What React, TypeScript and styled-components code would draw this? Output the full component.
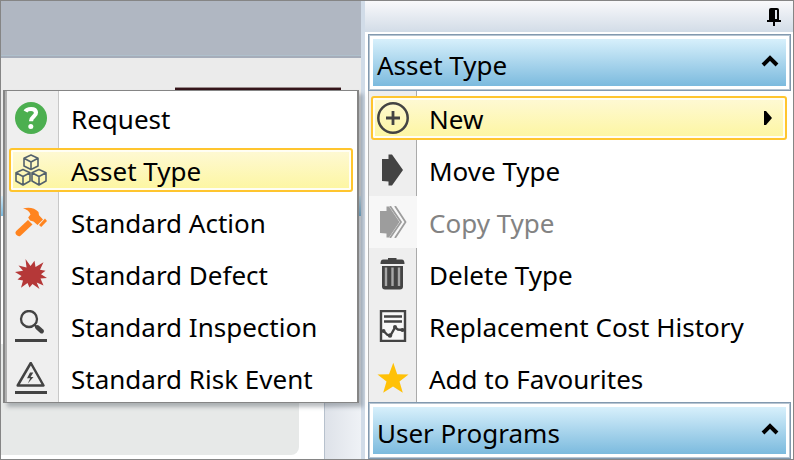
import React from "react";
import styled, { createGlobalStyle, css } from "styled-components";

const GlobalStyle = createGlobalStyle`
  *, *::before, *::after { box-sizing: border-box; }
  body {
    margin: 0;
    background: #fff;
    color: #000;
    font-family: "Noto Sans", "Open Sans", sans-serif;
    font-size: 26px;
    line-height: 36px;
  }
  button { font: inherit; color: inherit; }
`;

const Frame = styled.div`
  position: relative;
  display: grid;
  grid-template-columns: 360px 4px minmax(0, 1fr);
  min-height: 100vh;
  border: 1px solid #858585;
`;

const Workspace = styled.main`
  display: flex;
  flex-direction: column;
  background: #ebebeb;
`;

const WorkspaceHeader = styled.div`
  height: 57px;
  background: #b0b7c2;
  border-bottom: 2px solid #a5adba;
  box-shadow: inset 0 -1px #afc0cc;
`;

const TitleArea = styled.div`
  display: flex;
  height: 138px;
  padding: 29px 20px 0 174px;
`;

const TitleRule = styled.div`
  flex: 1;
  height: 4px;
  background: #35151a;
  border-top: 1px solid #998b8c;
`;

const BlueBand = styled.div`
  height: 20px;
  background: linear-gradient(#d4eaf6, #78b8dc);
`;

const Content = styled.div`
  flex: 1;
  display: grid;
  grid-template-columns: minmax(0, 1fr) 37px;
  background: #fff;
`;

const Card = styled.div`
  margin: 128px 25px 4px 0;
  border-radius: 0 0 8px 0;
  background: #e7e9e8;
`;

const ScrollTrack = styled.div`
  border-left: 1px solid #b7c1cd;
  background: linear-gradient(90deg, #dee2e9, #eff2f6);
`;

const Splitter = styled.div`
  background: #d1dce8;
`;

const Sidebar = styled.aside`
  display: flex;
  flex-direction: column;
  background: #fff;
`;

const PinBar = styled.div`
  display: flex;
  justify-content: flex-end;
  height: 31px;
  padding: 5px 10px 0 0;
  background: linear-gradient(#f9f9fb, #d2dce7);
`;

const PinButton = styled.button`
  width: 18px;
  height: 22px;
  padding: 0;
  border: 0;
  background: none;
  svg { display: block; }
`;

const Section = styled.section`
  margin: 2px 2px 0 3px;
  & + & { margin-top: 0; }
`;

const SectionButton = styled.button`
  display: flex;
  align-items: center;
  justify-content: space-between;
  width: 100%;
  height: 57px;
  padding: 4px 11px 0 8px;
  border: 1px solid #8299af;
  outline: 1px solid #b6c5d2;
  outline-offset: -2px;
  box-shadow: inset 0 0 0 4px #fff;
  background: linear-gradient(#d9f1fc 3px, #76b7dc 54px);
  text-align: left;
  svg { margin-bottom: 8px; }
`;

const rowSurface = css`
  border-color: #ffc52e;
  background: linear-gradient(#fef9d5, #fdf6a1);
  box-shadow: inset 0 0 0 2px #fffef4;
`;

const MenuItem = styled.button<{ $selected?: boolean; $gap: number }>`
  display: flex;
  align-items: center;
  gap: ${({ $gap }) => $gap}px;
  width: 100%;
  height: 44px;
  padding: 0 13px 0 4px;
  border: 2px solid transparent;
  border-radius: 3px;
  background: none;
  text-align: left;
  white-space: nowrap;
  ${({ $selected }) => $selected && rowSurface}
  &:disabled { color: #838383; }
  svg { flex: none; }
`;

const Label = styled.span`
  flex: 1;
  padding-top: 2px;
`;

const List = styled.ul`
  margin: 0;
  padding: 1px 0 0;
  list-style: none;
`;

const SidebarList = styled(List)`
  border-left: 1px solid #b1b1b1;
  background: linear-gradient(90deg, #eee 47px, #aaa 47px, #aaa 48px, #fff 48px);
`;

const Item = styled.li<{ $muted?: boolean }>`
  padding: 4px 4px 4px 2px;
  &:last-child { padding-bottom: 2px; }
  ${({ $muted }) => $muted && css`background: linear-gradient(90deg, #f7f7f7 48px, #fff 48px);`}
`;

const Flyout = styled.nav`
  position: absolute;
  top: 89px;
  left: 2px;
  width: 356px;
  border: 1px solid #858585;
  border-width: 1px 2px 1px 2px;
  box-shadow: 4px 4px 4px rgba(60, 70, 80, 0.35);
`;

const FlyoutList = styled(List)`
  border-left: 2px solid #b0b0b0;
  background: linear-gradient(90deg, #efefef 51px, #c8c8c8 51px, #c8c8c8 52px, #fff 52px);
`;

type IconName =
  | "request" | "cubes" | "hammer" | "defect" | "inspect" | "risk"
  | "plus" | "move" | "copy" | "trash" | "report" | "star";

const ink = "#434343";

const drawings: Record<IconName, React.ReactNode> = {
  request: (
    <>
      <circle cx="16" cy="16" r="16" fill="#4caf50" />
      <path d="M10.5 9.5C12 6.5 20.5 5.5 21 10.5C21.3 14.5 16 14.5 16 19.2" fill="none" stroke="#fff" strokeWidth="4.2" />
      <circle cx="15.8" cy="24.5" r="2.5" fill="#fff" />
    </>
  ),
  cubes: (
    <g fill="none" stroke="#53616c" strokeWidth="1.6" strokeLinejoin="round">
      <path d="M16 1 23 4.2V12L16 15.5 9 12V4.2ZM9 4.2 16 8 23 4.2M16 8V15.5" />
      <path d="M8 15.5 15 18.7V27L8 31 1 27V18.7ZM1 18.7 8 22.5 15 18.7M8 22.5V31" />
      <path d="M24 15.5 31 18.7V27L24 31 17 27V18.7ZM17 18.7 24 22.5 31 18.7M24 22.5V31" />
    </g>
  ),
  hammer: (
    <g fill="#ff841f">
      <path d="M8 2.5C14 .8 20 2 23.5 6L24 9.2 28 13.5 22.5 19 18.5 15.5 15 14.5 13.2 11.5 15.5 8.5C14.5 5 11.5 3.5 8 2.5Z" />
      <path d="M13 14 17.5 18.5 5.5 29.7C3 31.7-1.3 27.8 1.2 25Z" />
      <path d="M30 12.5 32 15 26.2 21 24 19Z" />
    </g>
  ),
  defect: (
    <path fill="#b53838" d="M10.5 1 15.5 8 19.5 2.8 20.5 9 28.5 4.2 25 11.8 30.5 12.8 26 16.3 32 20 25.5 20.6 28.5 27.5 21.7 24.5 24.5 31 17.5 26 14.5 29.5 12.5 25 6 29.7 8 22.5 2.5 21.6 6.5 18 0 14 8 12.7 3.5 7.5 11.5 9.5Z" />
  ),
  inspect: (
    <>
      <circle cx="14" cy="9" r="8" fill="none" stroke={ink} strokeWidth="2.3" />
      <path d="M19.5 15 22 17.3" stroke={ink} strokeWidth="2" />
      <path d="M22.3 17.3 26.7 21.2" stroke={ink} strokeWidth="4.5" strokeLinecap="round" />
      <path d="M0 30.5H32" stroke={ink} strokeWidth="3" />
    </>
  ),
  risk: (
    <>
      <path d="M15.8 1 28.5 23.5H2.7Z" fill="none" stroke={ink} strokeWidth="2.5" strokeLinejoin="round" />
      <path d="M15 10.5 12 16.3H15.2L12.8 21.5 18.5 15H15.6L18.3 10.5Z" fill={ink} />
      <path d="M0 30.5H32" stroke={ink} strokeWidth="3" />
    </>
  ),
  plus: (
    <g fill="none" stroke={ink}>
      <circle cx="16" cy="16" r="14.7" strokeWidth="2.5" />
      <path d="M9 16H23M16 9V23" strokeWidth="2.8" />
    </g>
  ),
  move: <path fill={ink} d="M5 5H11.5V.5H15L26 16 15 31.5H11.5V27.5L5 27Z" />,
  copy: (
    <>
      <path fill="#9d9d9d" d="M3 5H9.5V.5H12L22.5 16 12 31.5H9.5V27.5L3 27Z" />
      <path d="M13 0 24 16 13 32M18 0 28.5 16 18 32" fill="none" stroke="#9d9d9d" strokeWidth="1.8" />
    </>
  ),
  trash: (
    <>
      <path fill={ink} d="M11 0H19.5V1.5H24.5C27 1.5 27.5 3.5 27.5 6H3.5C3.5 3.5 4 1.5 6.5 1.5H11ZM5 8H26V28.5Q26 31.5 23 31.5H8Q5 31.5 5 28.5Z" />
      <path d="M9 9.5V28M15.5 9.5V28M22 9.5V28" stroke="#a6a6a6" strokeWidth="2.4" />
    </>
  ),
  report: (
    <>
      <path d="M4 1H28V31H4Z" fill="#f7f7f7" stroke={ink} strokeWidth="2.4" />
      <path d="M7 6.5H25M7 11.5H25" stroke={ink} strokeWidth="2.4" />
      <path d="M6.5 21 10.5 25 13.5 25.5 18 17.5 21 19.5 26 20" fill="none" stroke={ink} strokeWidth="2.4" />
      <g fill={ink}>
        <circle cx="6.5" cy="21" r="2" /><circle cx="13" cy="25.5" r="2.2" />
        <circle cx="18" cy="17" r="2" /><circle cx="25.5" cy="20" r="2.1" />
      </g>
    </>
  ),
  star: <path fill="#ffc107" d="M16.3.8 20.2 12.2 31.5 12.5 22.5 19.5 25.8 30.8 16 24.5 6.2 30.8 9.5 19.5.5 12.5 12 12.2Z" />,
};

const Icon = ({ name }: { name: IconName }) => (
  <svg width="32" height="32" viewBox="0 0 32 32" aria-hidden="true">{drawings[name]}</svg>
);

const Chevron = () => (
  <svg width="18" height="14" viewBox="0 0 18 14" aria-hidden="true">
    <path d="M2 11 9 4 16 11" fill="none" stroke="#000" strokeWidth="4" />
  </svg>
);

const SubmenuArrow = () => (
  <svg width="8" height="16" viewBox="0 0 8 16" aria-hidden="true">
    <path d="M0 1H2L8 8 2 15H0Z" />
  </svg>
);

const PushPin = () => (
  <svg width="18" height="22" viewBox="0 0 18 22" aria-hidden="true">
    <path d="M4 4Q4 2 6 2H12Q14 2 14 4V14H4Z" />
    <path d="M10 4H12V13H10Z" fill="#dfe4eb" />
    <path d="M2 14H16V16H10V20H8V16H2Z" />
  </svg>
);

const flyoutItems: { label: string; icon: IconName }[] = [
  { label: "Request", icon: "request" },
  { label: "Asset Type", icon: "cubes" },
  { label: "Standard Action", icon: "hammer" },
  { label: "Standard Defect", icon: "defect" },
  { label: "Standard Inspection", icon: "inspect" },
  { label: "Standard Risk Event", icon: "risk" },
];

const actions: { label: string; icon: IconName; disabled?: boolean }[] = [
  { label: "New", icon: "plus" },
  { label: "Move Type", icon: "move" },
  { label: "Copy Type", icon: "copy", disabled: true },
  { label: "Delete Type", icon: "trash" },
  { label: "Replacement Cost History", icon: "report" },
  { label: "Add to Favourites", icon: "star" },
];

export default function App() {
  return (
    <>
      <GlobalStyle />
      <Frame>
        <Workspace>
          <WorkspaceHeader />
          <TitleArea><TitleRule /></TitleArea>
          <BlueBand />
          <Content>
            <Card />
            <ScrollTrack />
          </Content>
        </Workspace>
        <Splitter />
        <Sidebar>
          <PinBar>
            <PinButton aria-label="Pin panel"><PushPin /></PinButton>
          </PinBar>
          <Section>
            <SectionButton aria-expanded="true">Asset Type<Chevron /></SectionButton>
            <SidebarList>
              {actions.map(({ label, icon, disabled }) => (
                <Item key={label} $muted={disabled}>
                  <MenuItem $gap={20} $selected={label === "New"} disabled={disabled}>
                    <Icon name={icon} />
                    <Label>{label}</Label>
                    {label === "New" && <SubmenuArrow />}
                  </MenuItem>
                </Item>
              ))}
            </SidebarList>
          </Section>
          <Section>
            <SectionButton aria-expanded="true">User Programs<Chevron /></SectionButton>
          </Section>
        </Sidebar>
        <Flyout aria-label="New">
          <FlyoutList>
            {flyoutItems.map(({ label, icon }) => (
              <Item key={label}>
                <MenuItem $gap={24} $selected={label === "Asset Type"}>
                  <Icon name={icon} />
                  <Label>{label}</Label>
                </MenuItem>
              </Item>
            ))}
          </FlyoutList>
        </Flyout>
      </Frame>
    </>
  );
}
